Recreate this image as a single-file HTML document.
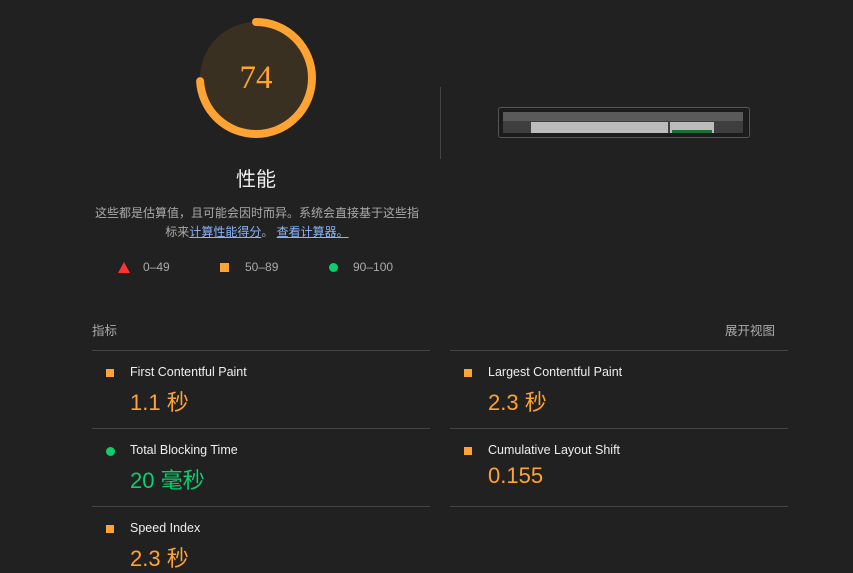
<!DOCTYPE html>
<html><head><meta charset="utf-8"><style>
body{margin:0;width:853px;height:569px;background:#212121;font-family:"Liberation Sans","Noto Sans CJK SC",sans-serif;overflow:hidden;position:relative;color:#ddd}
.abs{position:absolute}
.sq{width:8px;height:8px;background:#ffa333;position:absolute}
.dot{width:9px;height:9px;border-radius:50%;background:#0cce6b;position:absolute}
.mt{font-size:12.5px;color:#eee;position:absolute}
.mv{font-size:22px;color:#ffa333;position:absolute}
.line{position:absolute;height:1px;background:#444}
a{color:#8ab4f8;text-decoration:underline}
</style></head><body>
<svg class="abs" style="left:194px;top:16px" width="124" height="124" viewBox="0 0 124 124">
<circle cx="62" cy="62" r="56" fill="#3a3022"/>
<circle cx="62" cy="62" r="56" fill="none" stroke="#ffa333" stroke-width="8" stroke-linecap="round" stroke-dasharray="260.4 400" transform="rotate(-90 62 62)"/>
<text x="62" y="72" text-anchor="middle" font-family="Liberation Serif,serif" font-size="33" fill="#ffa333">74</text>
</svg>
<div class="abs" style="left:0;width:512px;top:163px;text-align:center;font-size:20px;color:#eee">性能</div>
<div class="abs" style="left:90px;width:334px;top:204px;text-align:center;font-size:12px;line-height:19px;color:#aaa">这些都是估算值，且可能会因时而异。系统会直接基于这些指标来<a>计算性能得分</a>。 <a>查看计算器。</a></div>
<svg class="abs" style="left:118px;top:262px" width="12" height="11"><polygon points="6,0 12,11 0,11" fill="#f33"/></svg>
<div class="abs" style="left:143px;top:260px;font-size:12px;color:#aaa">0–49</div>
<div class="sq" style="left:220px;top:263px;width:9px;height:9px"></div>
<div class="abs" style="left:245px;top:260px;font-size:12px;color:#aaa">50–89</div>
<div class="dot" style="left:329px;top:263px"></div>
<div class="abs" style="left:353px;top:260px;font-size:12px;color:#aaa">90–100</div>
<div class="abs" style="left:440px;top:87px;width:1px;height:72px;background:#444"></div>
<div class="abs" style="left:498px;top:107px;width:250px;height:29px;border:1px solid #555;border-radius:3px;background:#1c1c1c"></div>
<div class="abs" style="left:503px;top:112px;width:240px;height:9px;background:#5a5a5a"></div>
<div class="abs" style="left:503px;top:121px;width:240px;height:12px;background:#3e3e3e"></div>
<div class="abs" style="left:531px;top:122px;width:137px;height:11px;background:#bbb"></div>
<div class="abs" style="left:670px;top:122px;width:44px;height:11px;background:#bbb"></div>
<div class="abs" style="left:672px;top:130px;width:40px;height:3px;background:#1a6f36"></div>
<div class="abs" style="left:92px;top:320px;font-size:12.5px;color:#aaa">指标</div>
<div class="abs" style="left:725px;top:320px;font-size:12.5px;color:#aaa">展开视图</div>
<div class="line" style="left:92px;width:338px;top:350px"></div>
<div class="line" style="left:450px;width:338px;top:350px"></div>
<div class="line" style="left:92px;width:338px;top:428px"></div>
<div class="line" style="left:450px;width:338px;top:428px"></div>
<div class="line" style="left:92px;width:338px;top:506px"></div>
<div class="line" style="left:450px;width:338px;top:506px"></div>
<div class="sq" style="left:106px;top:369px"></div><div class="mt" style="left:130px;top:365px">First Contentful Paint</div><div class="mv" style="left:130px;top:385px">1.1 秒</div>
<div class="sq" style="left:464px;top:369px"></div><div class="mt" style="left:488px;top:365px">Largest Contentful Paint</div><div class="mv" style="left:488px;top:385px">2.3 秒</div>
<div class="dot" style="left:106px;top:447px;width:9px;height:9px"></div><div class="mt" style="left:130px;top:443px">Total Blocking Time</div><div class="mv" style="left:130px;top:463px;color:#0cce6b">20 毫秒</div>
<div class="sq" style="left:464px;top:447px"></div><div class="mt" style="left:488px;top:443px">Cumulative Layout Shift</div><div class="mv" style="left:488px;top:463px">0.155</div>
<div class="sq" style="left:106px;top:525px"></div><div class="mt" style="left:130px;top:521px">Speed Index</div><div class="mv" style="left:130px;top:541px">2.3 秒</div>
</body></html>
